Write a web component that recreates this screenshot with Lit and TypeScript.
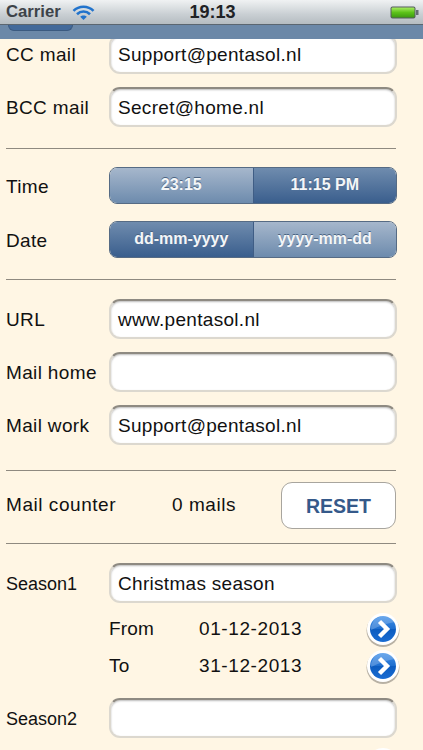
import { LitElement, html, css } from "lit";
import { customElement } from "lit/decorators.js";

const disclosure = (id: string) => html`<svg class="disc" viewBox="0 0 36 38" width="36" height="38" aria-hidden="true">
  <defs>
    <linearGradient id="b${id}" x1="0" y1="0" x2="0" y2="1">
      <stop offset="0" stop-color="#3f8fe8"/><stop offset="0.48" stop-color="#1f6fd0"/>
      <stop offset="0.52" stop-color="#0c5cc0"/><stop offset="1" stop-color="#1a6cd2"/>
    </linearGradient>
  </defs>
  <circle cx="18" cy="19.5" r="16.5" fill="#000" opacity=".28"/>
  <circle cx="18" cy="18" r="16" fill="#fff"/>
  <circle cx="18" cy="18" r="13" fill="url(#b${id})"/>
  <path d="M6 19 A13 13 0 0 1 30 11 Q18 13 6 19Z" fill="#fff" opacity=".22"/>
  <path d="M14.5 10.5 L22 18 L14.5 25.5" fill="none" stroke="#fff" stroke-width="4.4"/>
</svg>`;

@customElement("app-root")
export class AppRoot extends LitElement {
  static styles = css`
    :host { display: block; width: 423px; height: 750px; overflow: hidden; background: #fff6e4;
      font-family: "Liberation Sans", Arial, sans-serif; color: #111; }
    .status { height: 25px; box-sizing: border-box; display: grid; grid-template-columns: 1fr auto 1fr; align-items: center;
      padding: 0 4px 0 6px; background: linear-gradient(#f0f2f3, #c9cfd3 60%, #b5bcc1); border-bottom: 1px solid #5b6670;
      position: relative; z-index: 2; }
    .s-left { display: flex; align-items: center; gap: 11px; font-size: 16.7px; font-weight: 700; color: #3d4349; }
    .time { font-size: 18px; font-weight: 700; color: #202225; }
    .s-right { display: flex; justify-content: flex-end; }
    .nav { height: 14px; background: #6b88a8; position: relative; z-index: 2; }
    .nav-btn { width: 65px; height: 6px; margin-left: 8px; background: #42699a; border-radius: 0 0 7px 7px;
      border: 1px solid #3b5a80; border-top: 0; box-sizing: border-box; }
    .content { margin-top: -5px; padding: 0 26px 0 6px; display: flex; flex-direction: column; }
    .row { display: grid; grid-template-columns: 103px 288px; align-items: center; }
    .lbl { font-size: 19px; letter-spacing: .35px; padding-top: 2px; white-space: nowrap; }
    .lbl.small { font-size: 18px; letter-spacing: 0; }
    .lbl.wide { letter-spacing: .55px; padding: 0 0 2px; }
    .input { height: 40px; box-sizing: border-box; background: #fff; border-radius: 11px; padding: 2px 7px 0;
      display: flex; align-items: center; font-size: 19px; letter-spacing: .3px;
      border: 2px solid #dcd8cf; border-top: 2.5px solid #8e8a82; box-shadow: inset 0 1px 2px #bbb; }
    .mt8 { margin-top: 8px; }
    .mt13 { margin-top: 13px; }
    .mt17 { margin-top: 17px; }
    .mt18 { margin-top: 18px; }
    .mt19 { margin-top: 19px; }
    .hr { height: 1px; background: #8f8a80; margin-right: 1px; margin-top: 21px; }
    .hr.mt25 { margin-top: 25px; }
    .hr.mt14 { margin-top: 14px; }
    .seg { height: 37px; display: flex; box-sizing: border-box; border: 1px solid #566b84; border-radius: 8px; overflow: hidden; }
    .seg span { flex: 1; display: flex; align-items: center; justify-content: center; font-size: 16px; font-weight: 700;
      color: #f4f6f8; text-shadow: 0 -1px 0 #4b6482; padding-bottom: 2px; box-sizing: border-box; }
    .seg .off { background: linear-gradient(#a6b7cc, #6d8bad); }
    .seg .on { background: linear-gradient(#6f8cae, #3a5e8d); }
    .seg .div { border-left: 1px solid #3f5d85; }
    .counter { display: grid; grid-template-columns: 166px 109px 115px; align-items: center; margin-top: 11px; }
    .reset { height: 47px; box-sizing: border-box; background: #fff; border: 1px solid #a8a59e; border-radius: 11px;
      display: flex; align-items: center; justify-content: center; font-size: 19.5px; font-weight: 700; color: #35598a; padding-top: 1px; }
    .dates { display: grid; grid-template-columns: 103px 90px 1fr auto; align-items: center; font-size: 19px; height: 37px;
      letter-spacing: .2px; white-space: nowrap; }
    .dates .txt { padding-bottom: 2px; }
    .dates .val { padding-bottom: 2px; letter-spacing: .6px; }
    .disc { display: block; margin-right: -4px; }
  `;

  private input(label: string, value: string, cls: string, labelCls = "") {
    return html`<div class="row ${cls}"><div class="lbl ${labelCls}">${label}</div><div class="input">${value}</div></div>`;
  }

  private dateRow(label: string, value: string, id: string, cls = "") {
    return html`<div class="dates ${cls}"><div></div><div class="txt">${label}</div><div class="val">${value}</div>${disclosure(id)}</div>`;
  }

  render() {
    return html`
      <div class="status">
        <div class="s-left">Carrier
          <svg width="23" height="17" viewBox="0 0 23 17" aria-hidden="true">
            <g fill="none" stroke="#2173cc" stroke-width="2.6">
              <path d="M1.5 6.8 C7 1.3 16 1.3 21.5 6.8"/>
              <path d="M5 10.3 C8.8 6.6 14.2 6.6 18 10.3"/>
            </g>
            <path d="M8.2 12.8 C10 11 13 11 14.8 12.8 L11.5 16Z" fill="#2173cc"/>
          </svg>
        </div>
        <div class="time">19:13</div>
        <div class="s-right">
          <svg width="29" height="13" viewBox="0 0 29 13" aria-hidden="true">
            <defs><linearGradient id="bat" x1="0" y1="0" x2="0" y2="1">
              <stop offset="0" stop-color="#a6ec60"/><stop offset=".5" stop-color="#5cc21a"/><stop offset="1" stop-color="#3d9a12"/>
            </linearGradient></defs>
            <rect x=".5" y=".5" width="25" height="12" rx="2" fill="#555c60"/>
            <rect x="1.5" y="1.5" width="23" height="10" rx="1" fill="url(#bat)"/>
            <rect x="26" y="4" width="2.5" height="5" fill="#666d72"/>
          </svg>
        </div>
      </div>
      <div class="nav"><div class="nav-btn"></div></div>
      <div class="content">
        ${this.input("CC mail", "Support@pentasol.nl", "")}
        ${this.input("BCC mail", "Secret@home.nl", "mt13")}
        <div class="hr"></div>
        <div class="row mt18"><div class="lbl">Time</div>
          <div class="seg"><span class="off">23:15</span><span class="on div">11:15 PM</span></div></div>
        <div class="row mt17"><div class="lbl">Date</div>
          <div class="seg"><span class="on">dd-mm-yyyy</span><span class="off div">yyyy-mm-dd</span></div></div>
        <div class="hr"></div>
        ${this.input("URL", "www.pentasol.nl", "mt19")}
        ${this.input("Mail home", "", "mt13")}
        ${this.input("Mail work", "Support@pentasol.nl", "mt13")}
        <div class="hr mt25"></div>
        <div class="counter">
          <div class="lbl wide">Mail counter</div><div class="lbl wide">0 mails</div>
          <div class="reset">RESET</div>
        </div>
        <div class="hr mt14"></div>
        ${this.input("Season1", "Christmas season", "mt19", "small")}
        ${this.dateRow("From", "01-12-2013", "a", "mt8")}
        ${this.dateRow("To", "31-12-2013", "b")}
        ${this.input("Season2", "", "mt13", "small")}
        ${this.dateRow("", "", "c", "mt8")}
      </div>`;
  }
}
